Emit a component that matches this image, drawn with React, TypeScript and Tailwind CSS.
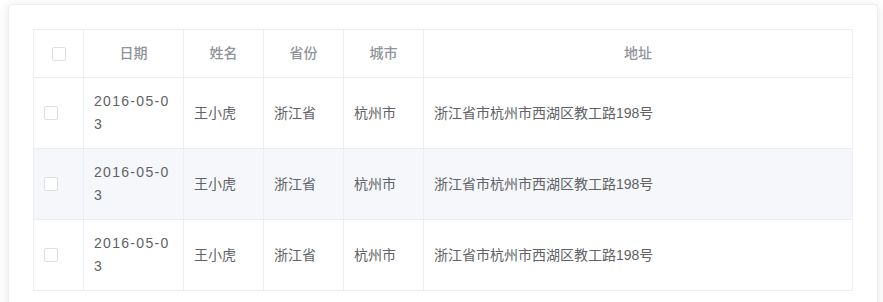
import React from "react";

const rows = [0, 1, 2].map(() => ({
  date: "2016-05-03",
  name: "王小虎",
  province: "浙江省",
  city: "杭州市",
  address: "浙江省市杭州市西湖区教工路198号",
}));

function Checkbox() {
  return (
    <span className="inline-block w-[14px] h-[14px] border border-[#dcdfe6] rounded-[2px] bg-white align-middle" />
  );
}

const th = "border-r border-b border-[#ebeef5] py-3 px-[10px] text-center leading-[23px] font-medium";
const td = "border-r border-b border-[#ebeef5] py-3 px-[10px] align-middle leading-[23px]";

export default function App() {
  return (
    <div lang="zh-CN" className="h-[302px] overflow-hidden bg-white font-['Liberation_Sans','Noto_Sans_CJK_SC',sans-serif] text-[14px] pt-1 pl-2">
      <div className="w-[870px] h-[320px] bg-white border border-[#ebeef5] rounded-[4px] shadow-[0_2px_12px_0_rgba(0,0,0,0.1)] p-6">
        <table className="w-[820px] border-separate border-spacing-0 border-t border-l border-[#ebeef5] table-fixed">
          <colgroup>
            <col className="w-[50px]" />
            <col className="w-[100px]" />
            <col className="w-[80px]" />
            <col className="w-[80px]" />
            <col className="w-[80px]" />
            <col className="w-[429px]" />
          </colgroup>
          <thead>
            <tr className="text-[#909399]">
              <th className={th}>
                <span className="inline-flex align-middle"><Checkbox /></span>
              </th>
              <th className={th}>日期</th>
              <th className={th}>姓名</th>
              <th className={th}>省份</th>
              <th className={th}>城市</th>
              <th className={th}>地址</th>
            </tr>
          </thead>
          <tbody className="text-[#606266]">
            {rows.map((r, i) => (
              <tr key={i} className={i === 1 ? "bg-[#f5f7fa]" : "bg-white"}>
                <td className={td}>
                  <span className="flex"><Checkbox /></span>
                </td>
                <td className={td + " break-all tracking-[1.3px]"}>{r.date}</td>
                <td className={td}>{r.name}</td>
                <td className={td}>{r.province}</td>
                <td className={td}>{r.city}</td>
                <td className={td}>{r.address}</td>
              </tr>
            ))}
          </tbody>
        </table>
      </div>
    </div>
  );
}
